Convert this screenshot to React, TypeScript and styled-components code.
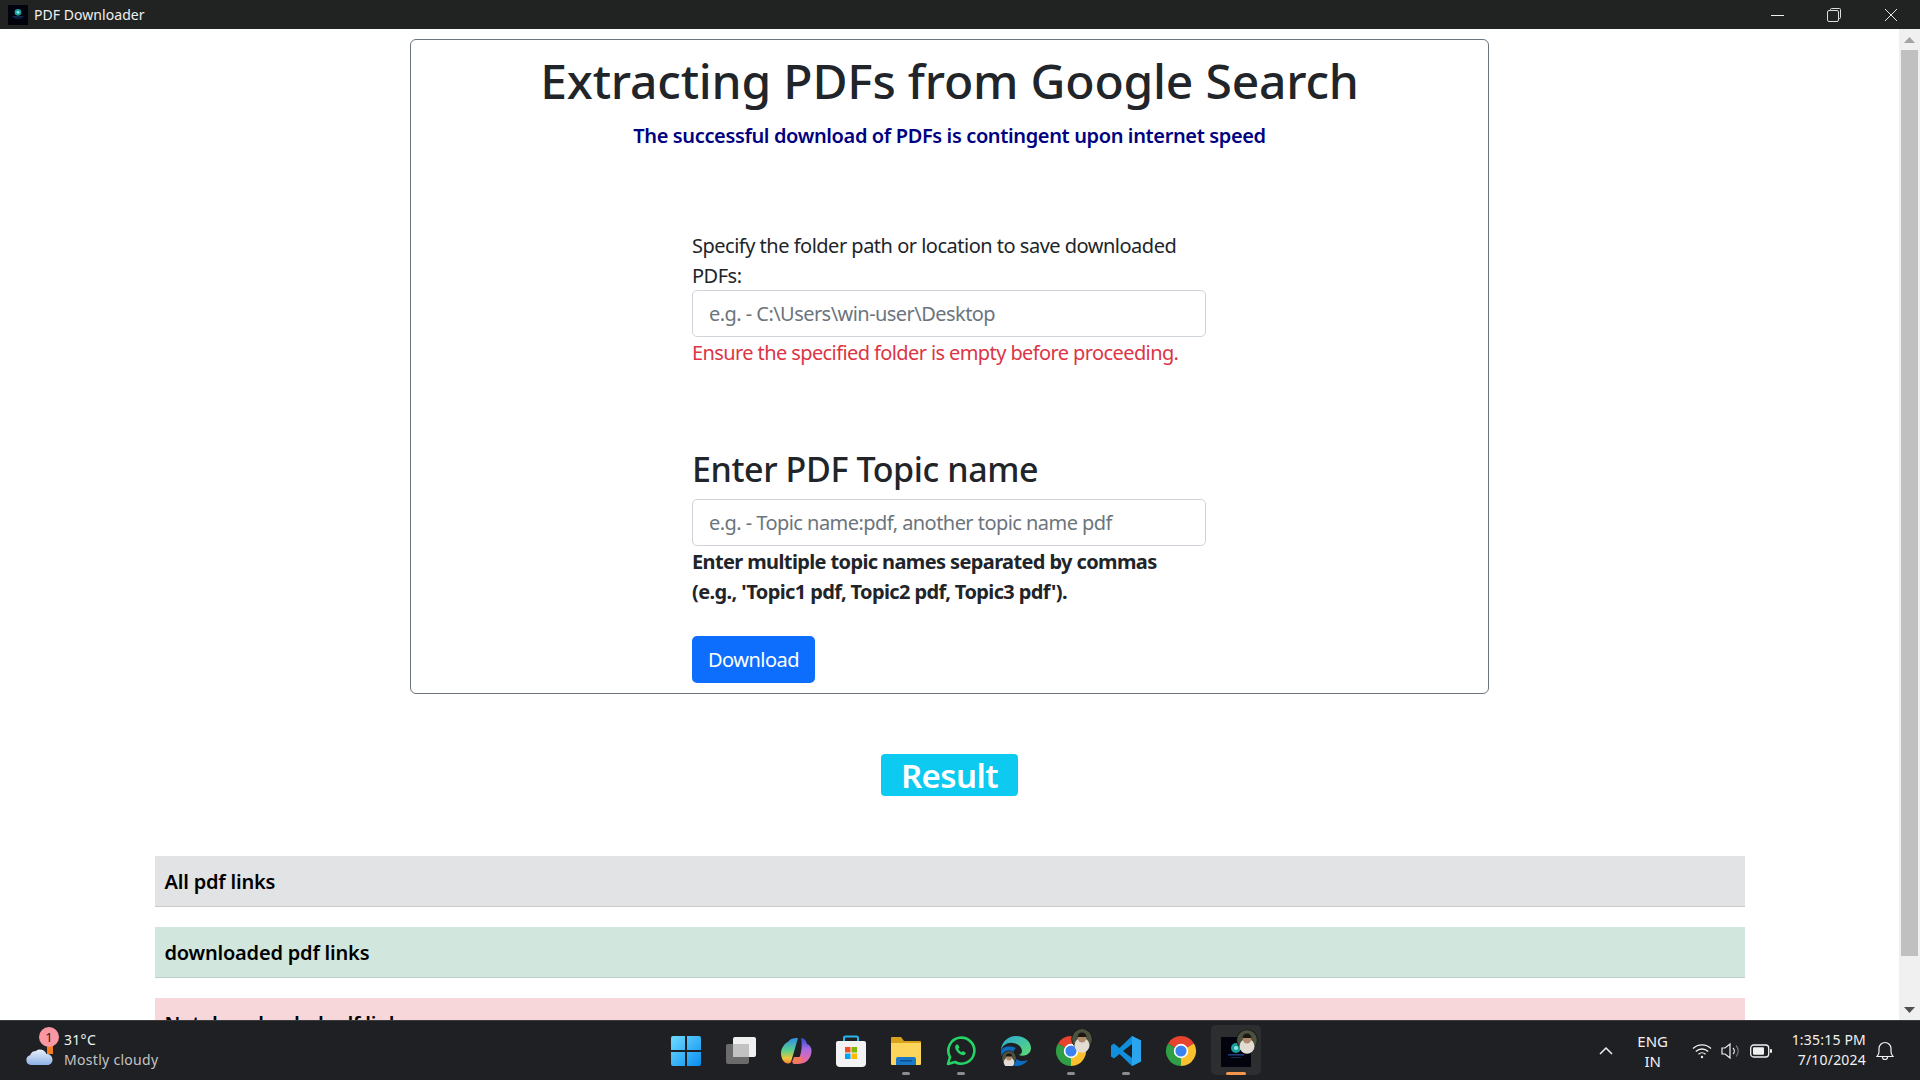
import React from "react";
import styled, { createGlobalStyle } from "styled-components";

const UI_FONT = `"Noto Sans", "Open Sans", sans-serif`;

const GlobalStyle = createGlobalStyle`
  html, body { margin: 0; padding: 0; background: #fff; overflow: hidden; }
  * { box-sizing: border-box; }
  body { font-family: ${UI_FONT}; color: #212529; }
`;

const Screen = styled.div`
  width: 1920px;
  height: 1080px;
  display: flex;
  flex-direction: column;
  overflow: hidden;
`;

/* window chrome */
const TitleBar = styled.div`
  height: 29px;
  flex: none;
  background: #202322;
  display: flex;
  align-items: center;
  padding-left: 8px;
  color: #f0f0f0;
  font-size: 14px;
`;

const TitleText = styled.span`
  margin-left: 6px;
  letter-spacing: 0.05px;
`;

const WindowButtons = styled.div`
  margin-left: auto;
  padding-right: 1px;
  display: flex;
  height: 100%;
`;

const WindowButton = styled.div`
  width: 57px;
  height: 100%;
  display: flex;
  align-items: center;
  justify-content: center;
`;

const Middle = styled.div`
  flex: 1;
  min-height: 0;
  display: flex;
`;

const Page = styled.main`
  flex: 1;
  min-width: 0;
  overflow: hidden;
  padding-top: 10px;
  display: flex;
  flex-direction: column;
  align-items: center;
`;

/* scrollbar */
const ScrollTrack = styled.div`
  width: 21px;
  flex: none;
  background: #f0f0f0;
  display: flex;
  flex-direction: column;
  align-items: center;
`;

const ScrollArrow = styled.div`
  height: 21px;
  flex: none;
  display: flex;
  align-items: center;
  justify-content: center;
`;

const ScrollThumb = styled.div`
  width: 17px;
  height: 906px;
  background: #c0c0c0;
`;

const ScrollSpacer = styled.div`
  flex: 1;
`;

/* form card */
const Card = styled.section`
  width: 1079px;
  height: 655px;
  flex: none;
  border: 1px solid #6c757d;
  border-radius: 6px;
  padding-top: 12px;
`;

const Heading = styled.h1`
  margin: 0;
  text-align: center;
  font-size: 48px;
  line-height: 58px;
  font-weight: 500;
  letter-spacing: -0.2px;
`;

const SubHeading = styled.p`
  margin: 11px 0 0;
  text-align: center;
  font-size: 20px;
  line-height: 30px;
  font-weight: 600;
  letter-spacing: -0.37px;
  color: #000080;
`;

const Form = styled.div`
  width: 514px;
  margin: 80px 0 0 281px;
`;

const Label = styled.label`
  display: block;
  margin-bottom: -1px;
  font-size: 20px;
  line-height: 30px;
  letter-spacing: -0.5px;
`;

const Input = styled.input`
  display: block;
  width: 100%;
  height: 47px;
  padding: 0 16px;
  border: 1px solid #ced4da;
  border-radius: 5px;
  background: #fff;
  font-family: ${UI_FONT};
  font-size: 20px;
  letter-spacing: -0.55px;
  outline: none;
  &::placeholder { color: #6c757d; opacity: 1; }
`;

const ErrorNote = styled.div`
  margin-top: 1px;
  font-size: 20px;
  line-height: 30px;
  letter-spacing: -0.6px;
  color: #dc3545;
`;

const TopicHeading = styled.h2`
  margin: 81px 0 0;
  font-size: 34px;
  line-height: 40px;
  font-weight: 500;
  letter-spacing: -0.4px;
`;

const TopicGroup = styled.div`
  margin-top: 10px;
`;

const HelpText = styled.div`
  margin-top: 1px;
  font-size: 20px;
  line-height: 30px;
  font-weight: 700;
  letter-spacing: -0.62px;
`;

const DownloadButton = styled.button`
  display: block;
  margin-top: 29px;
  width: 123px;
  height: 47px;
  border: 0;
  border-radius: 5px;
  background: #0d6efd;
  color: #fff;
  font-family: ${UI_FONT};
  font-size: 20px;
  letter-spacing: -0.5px;
  padding: 0;
`;

/* results */
const ResultBadge = styled.div`
  margin-top: 60px;
  width: 137px;
  height: 42px;
  flex: none;
  border-radius: 4px;
  background: #0dcaf0;
  color: #fff;
  font-size: 33px;
  line-height: 43px;
  font-weight: 600;
  text-align: center;
  letter-spacing: -0.6px;
`;

const LinkList = styled.div`
  width: 1590px;
  margin-top: 60px;
  display: flex;
  flex-direction: column;
  gap: 20px;
  flex: none;
`;

const LinkRow = styled.div<{ $bg: string; $line: string }>`
  height: 51px;
  padding: 0 10px;
  background: ${(p) => p.$bg};
  border-bottom: 1px solid ${(p) => p.$line};
  color: #000;
  font-size: 20px;
  line-height: 52px;
  font-weight: 600;
  letter-spacing: -0.2px;
`;

/* taskbar */
const Taskbar = styled.footer`
  height: 60px;
  flex: none;
  background: #1f2023;
  border-top: 1px solid #3a3b3d;
  display: grid;
  grid-template-columns: 1fr auto 1fr;
  align-items: center;
  color: #f2f2f2;
`;

const Weather = styled.div`
  display: flex;
  align-items: center;
  padding-left: 25px;
  position: relative;
`;

const WeatherBadge = styled.span`
  position: absolute;
  left: 39px;
  top: -3px;
  width: 20px;
  height: 20px;
  border-radius: 50%;
  background: #fb97a3;
  color: #1f2023;
  font-size: 13px;
  line-height: 20px;
  text-align: center;
`;

const WeatherText = styled.div`
  margin-left: 7px;
  padding-bottom: 2px;
  font-size: 14px;
  line-height: 20px;
  letter-spacing: 0.3px;
`;

const WeatherSub = styled.div`
  color: #c4c4c4;
`;

const Dock = styled.div`
  display: flex;
  height: 100%;
  margin-left: 1px;
`;

const DockSlot = styled.div<{ $active?: boolean }>`
  width: 55px;
  height: 100%;
  position: relative;
  display: flex;
  align-items: center;
  justify-content: center;
  ${(p) =>
    p.$active &&
    `&::before {
      content: "";
      position: absolute;
      left: 3px;
      right: 2px;
      top: 4px;
      bottom: 5px;
      border-radius: 5px;
      background: #2d2e30;
    }`}
  & > svg { position: relative; }
`;

const RunDot = styled.span<{ $active?: boolean }>`
  position: absolute;
  left: 50%;
  bottom: 5px;
  transform: translateX(-50%);
  width: ${(p) => (p.$active ? "20px" : "8px")};
  height: 3px;
  border-radius: 2px;
  background: ${(p) => (p.$active ? "#f5964a" : "#8c8c8c")};
`;

const Tray = styled.div`
  display: flex;
  align-items: center;
  justify-content: flex-end;
  height: 100%;
`;

const Lang = styled.div`
  margin-left: 22px;
  width: 36px;
  text-align: center;
  font-size: 15px;
  line-height: 20px;
`;

const TrayIcons = styled.div`
  margin-left: 21px;
  display: flex;
  align-items: center;
  gap: 9px;
`;

const Clock = styled.div`
  margin-left: 20px;
  padding-bottom: 2px;
  text-align: right;
  font-size: 14px;
  line-height: 20px;
  letter-spacing: 0.2px;
`;

const BellBox = styled.div`
  margin: 0 26px 0 10px;
  display: flex;
`;

const AppGlyph = ({ size }: { size: number }) => (
  <svg width={size} height={size} viewBox="0 0 30 30">
    <rect width="30" height="30" fill="#02030c" />
    <circle cx="15" cy="11" r="5" fill="#1c9f9c" />
    <circle cx="15" cy="11" r="2" fill="#8fe8e0" />
    <rect x="7" y="17" width="16" height="1.6" fill="#1f3c7a" />
    <rect x="10" y="20" width="10" height="1" fill="#16294f" />
  </svg>
);

const Avatar = ({ x, y, r }: { x: number; y: number; r: number }) => (
  <g>
    <circle cx={x} cy={y} r={r + 0.6} fill="#111" />
    <circle cx={x} cy={y} r={r} fill="#4c5240" />
    <circle cx={x} cy={y + r * 0.62} r={r * 0.75} fill="#e2dcd2" />
    <circle cx={x} cy={y - r * 0.08} r={r * 0.42} fill="#b08a6c" />
    <path d={`M${x - r * 0.45} ${y - r * 0.2}a${r * 0.45} ${r * 0.45} 0 0 1 ${r * 0.9} 0z`} fill="#1d1611" />
  </g>
);

const ChromeIcon = ({ avatar }: { avatar?: boolean }) => (
  <svg width="44" height="44" viewBox="0 0 44 44">
    <g transform="translate(7 7)">
      <path d="M15 15 L2 7.5 A15 15 0 0 1 28 7.5 Z" fill="#e8432e" />
      <path d="M15 15 L28 7.5 A15 15 0 0 1 15 30 Z" fill="#fbc02d" />
      <path d="M15 15 L15 30 A15 15 0 0 1 2 7.5 Z" fill="#2f9e44" />
      <circle cx="15" cy="15" r="7.2" fill="#fff" />
      <circle cx="15" cy="15" r="5.6" fill="#3b82f0" />
    </g>
    {avatar && <Avatar x={33} y={10} r={10} />}
  </svg>
);

export default function App() {
  return (
    <>
      <GlobalStyle />
      <Screen>
        <TitleBar>
          <AppGlyph size={20} />
          <TitleText>PDF Downloader</TitleText>
          <WindowButtons>
            <WindowButton>
              <svg width="14" height="14" viewBox="0 0 14 14">
                <path d="M1 7.5h13" stroke="#eee" strokeWidth="1" />
              </svg>
            </WindowButton>
            <WindowButton>
              <svg width="14" height="14" viewBox="0 0 14 14" fill="none" stroke="#ddd">
                <path d="M3.5 2.5V1.5a1 1 0 0 1 1-1h8a1 1 0 0 1 1 1v8a1 1 0 0 1-1 1h-1" />
                <rect x="0.5" y="2.5" width="11" height="11" rx="1.5" fill="#202322" />
              </svg>
            </WindowButton>
            <WindowButton>
              <svg width="14" height="14" viewBox="0 0 14 14">
                <path d="M1 1l12 12M13 1L1 13" stroke="#e6e6e6" strokeWidth="1" />
              </svg>
            </WindowButton>
          </WindowButtons>
        </TitleBar>

        <Middle>
          <Page>
            <Card>
              <Heading>Extracting PDFs from Google Search</Heading>
              <SubHeading>The successful download of PDFs is contingent upon internet speed</SubHeading>
              <Form>
                <Label>Specify the folder path or location to save downloaded PDFs:</Label>
                <Input placeholder="e.g. - C:\Users\win-user\Desktop" readOnly />
                <ErrorNote>Ensure the specified folder is empty before proceeding.</ErrorNote>
                <TopicHeading>Enter PDF Topic name</TopicHeading>
                <TopicGroup>
                  <Input placeholder="e.g. - Topic name:pdf, another topic name pdf" readOnly />
                  <HelpText>
                    Enter multiple topic names separated by commas
                    <br />
                    (e.g., 'Topic1 pdf, Topic2 pdf, Topic3 pdf').
                  </HelpText>
                </TopicGroup>
                <DownloadButton>Download</DownloadButton>
              </Form>
            </Card>
            <ResultBadge>Result</ResultBadge>
            <LinkList>
              <LinkRow $bg="#e2e3e5" $line="#c9cacc">All pdf links</LinkRow>
              <LinkRow $bg="#d1e7dd" $line="#bcd0c7">downloaded pdf links</LinkRow>
              <LinkRow $bg="#f8d7da" $line="#dfc2c4">Not downloaded pdf links</LinkRow>
            </LinkList>
          </Page>
          <ScrollTrack>
            <ScrollArrow>
              <svg width="11" height="6" viewBox="0 0 11 6">
                <path d="M5.5 0L11 6H0z" fill="#a3a3a3" />
              </svg>
            </ScrollArrow>
            <ScrollThumb />
            <ScrollSpacer />
            <ScrollArrow>
              <svg width="11" height="6" viewBox="0 0 11 6">
                <path d="M0 0h11L5.5 6z" fill="#505050" />
              </svg>
            </ScrollArrow>
          </ScrollTrack>
        </Middle>

        <Taskbar>
          <Weather>
            <svg width="32" height="32" viewBox="0 -3 32 32">
              <defs>
                <linearGradient id="cloudFill" x1="0" y1="0" x2="0" y2="1">
                  <stop offset="0" stopColor="#e8f0fb" />
                  <stop offset="1" stopColor="#8db2e6" />
                </linearGradient>
              </defs>
              <rect x="22" y="8" width="6" height="8" fill="#f57c1c" />
              <path
                d="M6 27a5 5 0 0 1-1-9.8 6.5 6.5 0 0 1 6-4.2c2.5-2.5 8.5-2 10.5 3a5.5 5.5 0 0 1 6 5.5c0 3-2 5.500-5 5.500z"
                fill="url(#cloudFill)"
              />
            </svg>
            <WeatherBadge>1</WeatherBadge>
            <WeatherText>
              31°C
              <WeatherSub>Mostly cloudy</WeatherSub>
            </WeatherText>
          </Weather>

          <Dock>
            <DockSlot>
              <svg width="30" height="30" viewBox="0 0 30 30">
                <defs>
                  <linearGradient id="winFill" x1="0" y1="0" x2="1" y2="1">
                    <stop offset="0" stopColor="#6fdcff" />
                    <stop offset="1" stopColor="#0a8df0" />
                  </linearGradient>
                </defs>
                <path
                  d="M2 0h12v14H0V2a2 2 0 0 1 2-2zM16 0h12a2 2 0 0 1 2 2v12H16zM0 16h14v14H2a2 2 0 0 1-2-2zM16 16h14v12a2 2 0 0 1-2 2H16z"
                  fill="url(#winFill)"
                />
              </svg>
            </DockSlot>
            <DockSlot>
              <svg width="32" height="30" viewBox="0 0 32 30">
                <rect x="1" y="8" width="23" height="20" rx="2" fill="#6b6b6b" />
                <rect x="8" y="1" width="23" height="20" rx="2" fill="#f0f0f0" />
                <rect x="8" y="8" width="16" height="13" fill="#c2c2c2" />
              </svg>
            </DockSlot>
            <DockSlot>
              <svg width="32" height="30" viewBox="0 0 32 30">
                <defs>
                  <linearGradient id="copA" x1="0" y1="0" x2="0" y2="1">
                    <stop offset="0" stopColor="#2f8fe8" />
                    <stop offset="0.5" stopColor="#5fd08a" />
                    <stop offset="0.8" stopColor="#f5c53a" />
                    <stop offset="1" stopColor="#f0803a" />
                  </linearGradient>
                  <linearGradient id="copB" x1="0" y1="0" x2="0" y2="1">
                    <stop offset="0" stopColor="#2b50d8" />
                    <stop offset="0.45" stopColor="#b06be0" />
                    <stop offset="1" stopColor="#f46a8f" />
                  </linearGradient>
                </defs>
                <path d="M9 5c2-3 6-3 9-3l-7 24c-1 1.500-3 2-5 1-3-1-5-6-5-10 0-5 4-10 8-12z" fill="url(#copA)" />
                <path d="M21 2c3 0 5 2 6 6 3 1 5 4 4.500 8-.5 5-4 10-8 11-2 1-7 1-11 1l7-7c2-4 3-13 1.500-19z" fill="url(#copB)" />
                <path d="M12 26c2 2 6 2 9 0 1-2 1.500-3 1.500-5H14z" fill="#f4785a" />
              </svg>
            </DockSlot>
            <DockSlot>
              <svg width="30" height="32" viewBox="0 0 30 32">
                <path d="M8 7V3a1.500 1.500 0 0 1 1.500-1.500h11A1.500 1.500 0 0 1 22 3v4" fill="none" stroke="#2bb5e8" strokeWidth="2" />
                <path d="M2 6h26a2 2 0 0 1 2 2v20a4 4 0 0 1-4 4H4a4 4 0 0 1-4-4V8a2 2 0 0 1 2-2z" fill="#f3f3f3" />
                <rect x="9" y="12" width="5.500" height="5.500" fill="#f25022" />
                <rect x="15.500" y="12" width="5.500" height="5.500" fill="#7fba00" />
                <rect x="9" y="18.500" width="5.500" height="5.500" fill="#00a4ef" />
                <rect x="15.500" y="18.500" width="5.500" height="5.500" fill="#ffb900" />
              </svg>
            </DockSlot>
            <DockSlot>
              <svg width="30" height="28" viewBox="0 0 30 28">
                <path d="M1 0h9l3 4h16a1 1 0 0 1 1 1v6H0V1a1 1 0 0 1 1-1z" fill="#d9a21b" />
                <path d="M0 6h30v21a1 1 0 0 1-1 1H1a1 1 0 0 1-1-1z" fill="#fbd55c" />
                <path d="M5 22a2 2 0 0 1 2-2h16a2 2 0 0 1 2 2v6H5z" fill="#1a78c8" />
                <rect x="9" y="23" width="12" height="1.500" fill="#0b4f8f" />
              </svg>
              <RunDot />
            </DockSlot>
            <DockSlot>
              <svg width="30" height="30" viewBox="0 0 30 30" fill="none">
                <path
                  d="M2 28l2-7A13 13 0 1 1 9 26z"
                  stroke="#25d366"
                  strokeWidth="2.600"
                  strokeLinejoin="round"
                />
                <path
                  d="M10.500 8.500c-1.500 1-2 3-.5 5.500 1.500 2.500 3.500 4.300 6 5 2 .5 3.500-.5 4-2l-3-2-1.500 1.200c-1.500-.7-2.500-1.800-3.200-3.200l1.200-1.500-1.500-3z"
                  fill="#25d366"
                />
              </svg>
              <RunDot />
            </DockSlot>
            <DockSlot>
              <svg width="30" height="30" viewBox="0 0 30 30">
                <defs>
                  <linearGradient id="edgeA" x1="0" y1="0" x2="1" y2="1">
                    <stop offset="0" stopColor="#2aa9d8" />
                    <stop offset="1" stopColor="#5fdc72" />
                  </linearGradient>
                </defs>
                <path d="M15 0C6 0 0 7 0 15c1-6 7-9 12-8 5 .5 9 4 9 8 0 2-1 3-3 4 4 2 12 0 12-7C30 6 24 0 15 0z" fill="url(#edgeA)" />
                <path d="M0 15c0 9 7 15 15 15 5 0 9-2 12-6-5 2-11 1-13-3-2-3-2-7 1-9C8 9 1 11 0 15z" fill="#0c6cc0" />
                <Avatar x={8} y={22} r={7} />
              </svg>
            </DockSlot>
            <DockSlot>
              <ChromeIcon avatar />
              <RunDot />
            </DockSlot>
            <DockSlot>
              <svg width="30" height="30" viewBox="0 0 30 30">
                <path d="M21 0l9 4.500v21L21 30 8.500 18 3 22.500 0 20.500v-11L3 7.500 8.500 12z" fill="#0f8fdc" />
                <path d="M21 8L12 15l9 7z" fill="#1f2023" />
                <path d="M21 0l9 4.500v21L21 30z" fill="#2aa5ee" />
              </svg>
              <RunDot />
            </DockSlot>
            <DockSlot>
              <ChromeIcon />
            </DockSlot>
            <DockSlot $active>
              <svg width="44" height="44" viewBox="0 0 44 44">
                <g transform="translate(7 8)">
                  <AppGlyph size={30} />
                </g>
                <Avatar x={33} y={11} r={10} />
              </svg>
              <RunDot $active />
            </DockSlot>
          </Dock>

          <Tray>
            <svg width="14" height="9" viewBox="0 0 14 9">
              <path d="M1 8l6-6 6 6" fill="none" stroke="#f0f0f0" strokeWidth="1.500" />
            </svg>
            <Lang>
              ENG
              <br />
              IN
            </Lang>
            <TrayIcons>
              <svg width="20" height="16" viewBox="0 0 20 16" fill="none" stroke="#f0f0f0" strokeWidth="1.300">
                <path d="M1 5.500a13 13 0 0 1 18 0M3.800 8.500a9 9 0 0 1 12.400 0M6.500 11.300a5 5 0 0 1 7 0" />
                <circle cx="10" cy="14" r="1.200" fill="#f0f0f0" stroke="none" />
              </svg>
              <svg width="20" height="18" viewBox="0 0 20 18" fill="none">
                <path d="M1 6h3l5-4v14l-5-4H1z" stroke="#f0f0f0" strokeWidth="1.200" />
                <path d="M12 6a4 4 0 0 1 0 6" stroke="#f0f0f0" strokeWidth="1.100" />
                <path d="M15 3.500a8 8 0 0 1 0 11" stroke="#7b7b7b" strokeWidth="1.100" />
              </svg>
              <svg width="22" height="14" viewBox="0 0 22 14" fill="none">
                <rect x="0.700" y="1" width="18" height="12" rx="3" stroke="#f0f0f0" strokeWidth="1.300" />
                <rect x="3" y="3.300" width="11" height="7.400" rx="1" fill="#f0f0f0" />
                <rect x="20" y="5" width="2" height="4" rx="1" fill="#f0f0f0" />
              </svg>
            </TrayIcons>
            <Clock>
              1:35:15 PM
              <br />
              7/10/2024
            </Clock>
            <BellBox>
              <svg width="18" height="20" viewBox="0 0 18 20" fill="none" stroke="#f0f0f0" strokeWidth="1.200">
                <path d="M1 15.500c1.500-1.500 2-2.500 2-5V7.500a6 6 0 0 1 12 0v3c0 2.500.5 3.500 2 5z" />
                <path d="M6.500 16a2.500 2.500 0 0 0 5 0" />
              </svg>
            </BellBox>
          </Tray>
        </Taskbar>
      </Screen>
    </>
  );
}
